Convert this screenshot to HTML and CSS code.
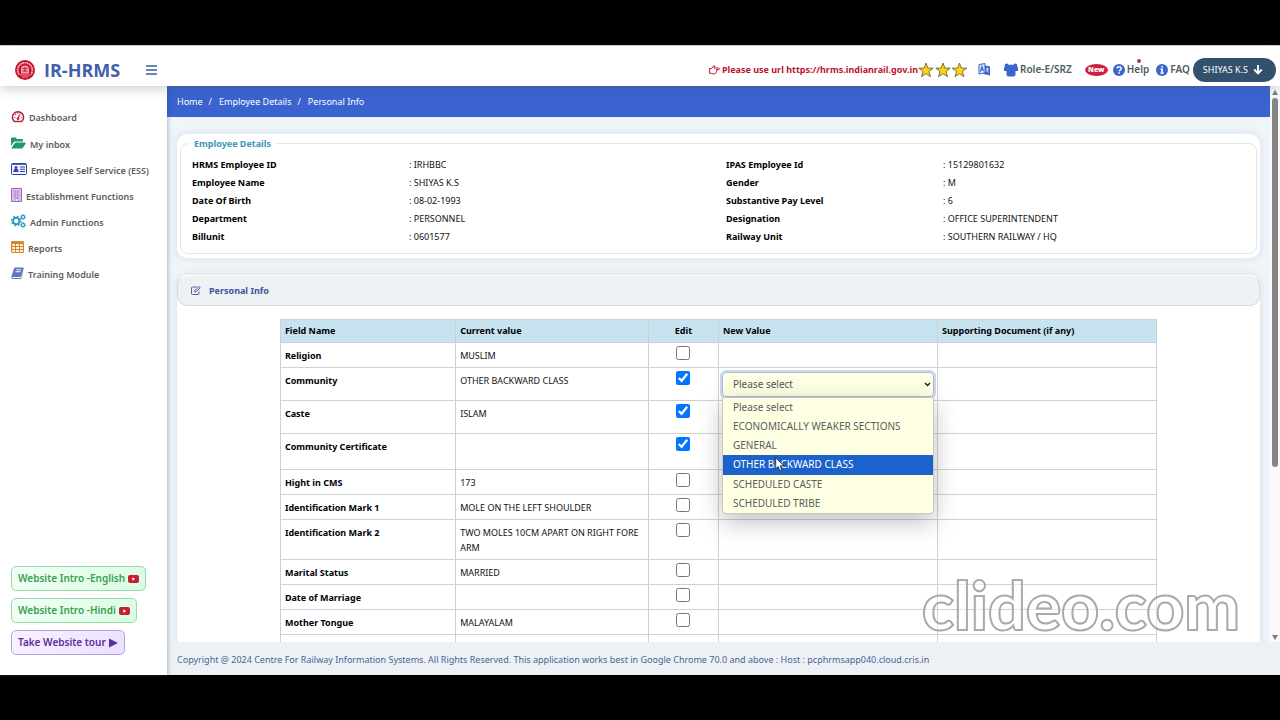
FILE: index.html
```html
<!DOCTYPE html>
<html lang="en">
<head>
  <meta charset="UTF-8">
  <title>IR-HRMS</title>
  <link rel="stylesheet" href="styles.css">
</head>
<body>
  <header class="topbar">
    <svg class="logo" width="20" height="20" viewBox="0 0 20 20">
      <circle cx="10" cy="10" r="10" fill="#c9142f"/>
      <path d="M4.200 14.500a7.300 7.300 0 1 1 11.600 0" fill="none" stroke="#f3c4ca" stroke-width="1.500" stroke-dasharray="1.700 .5"/>
      <path d="M6 13.500V9.500a4 4 0 0 1 8 0v4z" fill="#eda0aa"/>
      <path d="M7.500 8.500h5M7.500 11h5M10 7v5" stroke="#c9142f" stroke-width=".9"/>
      <path d="M5 15h10M7 17h6" stroke="#eda0aa" stroke-width=".9"/>
    </svg>
    <h1>IR-HRMS</h1>
    <button class="menu" aria-label="Menu">
      <svg width="12" height="10" viewBox="0 0 12 10"><path d="M0 1h11M0 5h11M0 9h11" stroke="#3d5f9c" stroke-width="1.6"/></svg>
    </button>
    <div class="notice">
      <svg width="11" height="10" viewBox="0 0 11 10" fill="none" stroke="#c2142c" stroke-width="1"><path d="M.6 3.5v4.8h1.700M.6 3.5h2L4.5.9c.9-.5 1.7.2 1.1 1.1L5 3h4.6c1.1 0 1.1 1.6 0 1.6H7.2M7.2 4.6c.9.2.9 1.4 0 1.5.7.3.5 1.5-.4 1.5 0 1-.5 1.300-1.400 1.300H3.9L2.300 8.300"/></svg>
      <span>Please use url https://hrms.indianrail.gov.in</span>
    </div>
    <svg class="stars" width="50" height="16" viewBox="0 0 50 16" fill="#ffd51c" stroke="#5d5518" stroke-width=".8">
      <path d="M8 1l1.8 5.1 5.4.1-4.3 3.3 1.6 5.2L8 11.6l-4.5 3.1 1.6-5.2L.8 6.2l5.4-.1z"/>
      <path d="M25 1l1.8 5.1 5.4.1-4.3 3.3 1.6 5.2-4.5-3.1-4.5 3.1 1.6-5.2-4.3-3.3 5.4-.1z"/>
      <path d="M41.500 1l1.800 5.100 5.400.1-4.300 3.300 1.600 5.200-4.500-3.100-4.500 3.100 1.600-5.200-4.300-3.300 5.400-.1z"/>
    </svg>
    <nav class="toplinks">
      <a href="#" class="language" aria-label="Language">
        <svg width="13" height="13" viewBox="0 0 13 13"><path d="M5.500 2l6.500 1.500v9L5.500 11z" fill="#3c64cf"/><path d="M1 1.500L7 .6v9.200L1 11z" fill="#dbe5fb" stroke="#3c64cf"/><path d="M2.500 8.500L4 3.500l1.600 4.600M3 7h2.200" fill="none" stroke="#3c64cf" stroke-width="1.100"/><path d="M8 5.700l3 .6M9.500 4.800v1.200c0 1.500-.7 2.300-1.500 2.700M8.500 7.200L11 9.500" fill="none" stroke="#fff" stroke-width=".7"/></svg>
      </a>
      <a href="#" class="role">
        <svg width="14" height="14" viewBox="0 0 14 14" fill="#3c64cf"><path d="M.8 3.500Q.400.800 2.700.600 4.500.600 5 2.300 7 .900 9 2.300 9.500.600 11.300.600q2.300.200 1.900 2.900Q14 4.300 14 5.500V8h-2.500v3.500q0 2-2 2h-5q-2 0-2-2V8H0V5.500Q0 4.300.8 3.500z"/></svg>
        <span>Role-E/SRZ</span>
      </a>
      <a href="#" class="help">
        <b class="new">New</b>
        <svg width="12" height="12" viewBox="0 0 12 12"><circle cx="6" cy="6" r="6" fill="#3c64cf"/><path d="M4 4.600c0-2.700 4.200-2.500 4.200-.1C8.200 6 6.200 6 6.100 7.400" fill="none" stroke="#fff" stroke-width="1.500"/><path d="M5.300 8.300h1.600v1.500H5.300z" fill="#fff"/></svg>
        <span class="help-text">Help<i class="dot"></i></span>
      </a>
      <a href="#" class="faq">
        <svg width="12" height="12" viewBox="0 0 12 12"><circle cx="6" cy="6" r="6" fill="#3c64cf"/><path d="M5.200 2h1.700v1.600H5.200zM4.400 4.600h2.500v3.900h.9v1.300H4.300V8.500h.9V5.800h-.8z" fill="#fff"/></svg>
        <span>FAQ</span>
      </a>
    </nav>
    <button class="user">SHIYAS K.S
      <svg width="10" height="10" viewBox="0 0 10 10"><path d="M5 0v8M1.200 4.500L5 8.300l3.800-3.800" fill="none" stroke="#fff" stroke-width="1.900"/></svg>
    </button>
  </header>

  <div class="layout">
    <aside class="sidebar">
      <nav class="sidenav">
        <a href="#" class="first">
          <svg width="14" height="13" viewBox="0 0 14 13" fill="none" stroke="#b3223a"><path d="M3.500 11.600a5.600 5.600 0 1 1 7 0z" stroke-width="1.500"/><path d="M7 8.500L8.700 4.500" stroke-width="1.200"/><circle cx="7" cy="8.800" r=".9" fill="#b3223a"/><path d="M3.400 7.500h1M9.800 7.500h1M4.300 4.300l.8.700M7 2.800v1M9.500 4.300l.5-.3" stroke-width="1.200"/></svg>
          <span>Dashboard</span>
        </a>
        <a href="#">
          <svg width="15" height="12" viewBox="0 0 15 12" fill="#229578"><path d="M0 9V1.500Q0 .5 1 .5h3.500q1 0 1 1V2H11q1 0 1 1v1.500H4.500q-1.400 0-2.300 1.200z"/><path d="M.5 11l3-4.500q.6-.9 1.600-.9h9.100q1 0 .4 1l-2.500 4q-.6.900-1.600.900H1.200q-1 0-.7-.5z"/></svg>
          <span>My inbox</span>
        </a>
        <a href="#">
          <svg width="16" height="12" viewBox="0 0 16 12"><rect x=".5" y=".5" width="15" height="11" rx="1" fill="#f1f4ff" stroke="#2b43ad"/><path d="M1 1.300h14" stroke="#2b43ad"/><circle cx="5" cy="4.600" r="1.500" fill="#2b43ad"/><path d="M2.500 9V7.600q0-1.500 1.500-1.500h2q1.500 0 1.500 1.500V9zM9 3.500h5v1H9zM9 5.700h5v1H9zM9 8h5v1H9z" fill="#2b43ad"/></svg>
          <span>Employee Self Service (ESS)</span>
        </a>
        <a href="#">
          <svg width="11" height="14" viewBox="0 0 11 14"><path d="M.5.500h10v13H.5z" fill="#e0c8f0" stroke="#9a62c0"/><path d="M2.500 3h6M2.500 5h6M2.500 7h6M2.500 9h6" stroke="#8d55b7" stroke-width="1" stroke-dasharray="1 .7"/><path d="M4 10.500h3v3H4z" fill="#fff" stroke="#9a62c0" stroke-width=".8"/></svg>
          <span>Establishment Functions</span>
        </a>
        <a href="#">
          <svg width="15" height="14" viewBox="0 0 15 14" fill="none" stroke="#249bbd"><circle cx="5.300" cy="7" r="3.200" stroke-width="2"/><circle cx="5.300" cy="7" r="4.800" stroke-width="1.200" stroke-dasharray="1.800 1.970"/><circle cx="12" cy="3" r="1.600" stroke-width="1.200"/><circle cx="12" cy="3" r="2.500" stroke-width=".7" stroke-dasharray="1 .95"/><circle cx="12" cy="11" r="1.600" stroke-width="1.200"/><circle cx="12" cy="11" r="2.500" stroke-width=".7" stroke-dasharray="1 .95"/></svg>
          <span>Admin Functions</span>
        </a>
        <a href="#">
          <svg width="13" height="12" viewBox="0 0 13 12"><rect width="13" height="12" rx="1.200" fill="#d18a32"/><path d="M1.200 3h2.800v2H1.200zM5 3h3v2H5zM9 3h2.800v2H9zM1.200 6h2.800v2H1.200zM5 6h3v2H5zM9 6h2.800v2H9zM1.200 9h2.800v2H1.200zM5 9h3v2H5zM9 9h2.800v2H9z" fill="#fff1d9"/></svg>
          <span>Reports</span>
        </a>
        <a href="#">
          <svg width="13" height="12" viewBox="0 0 13 12"><path d="M4 .4h8.200q.8 0 .5 1L10.400 9q-.3 1-1.200 1H2q-1 0-.7 1H10L12.900 3l-2.500 8.400q-.2.600-1 .600H1.700Q0 12 .3 10L3 1.200Q3.200.4 4 .4z" fill="#6178be"/><path d="M5.200 2.800h5M4.600 4.700h5" stroke="#fff" stroke-width=".9"/></svg>
          <span>Training Module</span>
        </a>
      </nav>
      <div class="tours">
        <button class="tour">Website Intro -English
          <svg width="11" height="8" viewBox="0 0 11 8"><rect width="11" height="8" rx="2" fill="#c51f32"/><path d="M4.300 2.200v3.600L7.300 4z" fill="#fff"/></svg>
        </button>
        <button class="tour">Website Intro -Hindi
          <svg width="11" height="8" viewBox="0 0 11 8"><rect width="11" height="8" rx="2" fill="#c51f32"/><path d="M4.300 2.200v3.600L7.300 4z" fill="#fff"/></svg>
        </button>
        <button class="tour purple">Take Website tour
          <svg width="9" height="10" viewBox="0 0 9 10"><path d="M0 .500v9L9 5z" fill="#5b2d9e"/></svg>
        </button>
      </div>
    </aside>

    <main class="main">
      <div class="scroll-area">
        <div class="page">
          <nav class="breadcrumb">
            <a href="#">Home</a><span>/</span><a href="#">Employee Details</a><span>/</span><a href="#">Personal Info</a>
          </nav>

          <section class="card details">
            <fieldset>
              <legend>Employee Details</legend>
              <dl>
                <dt>HRMS Employee ID</dt><dd>: IRHBBC</dd>
                <dt>IPAS Employee Id</dt><dd>: 15129801632</dd>
                <dt>Employee Name</dt><dd>: SHIYAS K.S</dd>
                <dt>Gender</dt><dd>: M</dd>
                <dt>Date Of Birth</dt><dd>: 08-02-1993</dd>
                <dt>Substantive Pay Level</dt><dd>: 6</dd>
                <dt>Department</dt><dd>: PERSONNEL</dd>
                <dt>Designation</dt><dd>: OFFICE SUPERINTENDENT</dd>
                <dt>Billunit</dt><dd>: 0601577</dd>
                <dt>Railway Unit</dt><dd>: SOUTHERN RAILWAY / HQ</dd>
              </dl>
            </fieldset>
          </section>

          <section class="card personal">
            <h2>
              <svg width="10" height="9" viewBox="0 0 10 9" fill="none" stroke="#4664ac"><path d="M6 1H1.500Q.5 1 .5 2v5.500q0 1 1 1h5.500q1 0 1-1V5.500"/><path d="M3.700 5.800l.3-1.500L8 .6l1.300 1.200-4 3.800z"/></svg>
              Personal Info
            </h2>
            <table>
              <thead>
                <tr><th>Field Name</th><th>Current value</th><th class="edit">Edit</th><th>New Value</th><th>Supporting Document (if any)</th></tr>
              </thead>
              <tbody>
                <tr><th>Religion</th><td>MUSLIM</td><td class="edit"><input type="checkbox" aria-label="Edit Religion"></td><td></td><td></td></tr>
                <tr class="tall"><th>Community</th><td>OTHER BACKWARD CLASS</td><td class="edit"><input type="checkbox" aria-label="Edit Community" checked></td>
                  <td class="new-value">
                    <select aria-label="Community">
                      <option>Please select</option>
                      <option>ECONOMICALLY WEAKER SECTIONS</option>
                      <option>GENERAL</option>
                      <option>OTHER BACKWARD CLASS</option>
                      <option>SCHEDULED CASTE</option>
                      <option>SCHEDULED TRIBE</option>
                    </select>
                    <ul class="options">
                      <li>Please select</li>
                      <li>ECONOMICALLY WEAKER SECTIONS</li>
                      <li>GENERAL</li>
                      <li class="active">OTHER BACKWARD CLASS
                        <svg class="cursor" width="10" height="15" viewBox="0 0 10 15"><path d="M.700.800v11l2.500-2.300 1.700 4 1.900-.8-1.700-3.900h3.700z" fill="#fff" stroke="#222" stroke-width=".8"/></svg>
                      </li>
                      <li>SCHEDULED CASTE</li>
                      <li>SCHEDULED TRIBE</li>
                    </ul>
                  </td><td></td></tr>
                <tr class="tall"><th>Caste</th><td>ISLAM</td><td class="edit"><input type="checkbox" aria-label="Edit Caste" checked></td><td></td><td></td></tr>
                <tr class="taller"><th>Community Certificate</th><td></td><td class="edit"><input type="checkbox" aria-label="Edit Community Certificate" checked></td><td></td><td></td></tr>
                <tr><th>Hight in CMS</th><td>173</td><td class="edit"><input type="checkbox" aria-label="Edit Hight in CMS"></td><td></td><td></td></tr>
                <tr><th>Identification Mark 1</th><td>MOLE ON THE LEFT SHOULDER</td><td class="edit"><input type="checkbox" aria-label="Edit Identification Mark 1"></td><td></td><td></td></tr>
                <tr><th>Identification Mark 2</th><td>TWO MOLES 10CM APART ON RIGHT FORE ARM</td><td class="edit"><input type="checkbox" aria-label="Edit Identification Mark 2"></td><td></td><td></td></tr>
                <tr><th>Marital Status</th><td>MARRIED</td><td class="edit"><input type="checkbox" aria-label="Edit Marital Status"></td><td></td><td></td></tr>
                <tr><th>Date of Marriage</th><td></td><td class="edit"><input type="checkbox" aria-label="Edit Date of Marriage"></td><td></td><td></td></tr>
                <tr><th>Mother Tongue</th><td>MALAYALAM</td><td class="edit"><input type="checkbox" aria-label="Edit Mother Tongue"></td><td></td><td></td></tr>
                <tr class="tall"><th></th><td></td><td></td><td></td><td></td></tr>
              </tbody>
            </table>
          </section>
        </div>
        <div class="scrollbar">
          <svg width="6" height="5" viewBox="0 0 6 5"><path d="M3 0l3 5H0z" fill="#7b7b7b"/></svg>
          <div class="thumb"></div>
          <svg width="6" height="5" viewBox="0 0 6 5"><path d="M3 5l3-5H0z" fill="#7b7b7b"/></svg>
        </div>
      </div>
      <footer>Copyright @ 2024 Centre For Railway Information Systems. All Rights Reserved. This application works best in Google Chrome 70.0 and above : Host : pcphrmsapp040.cloud.cris.in</footer>
    </main>
  </div>
  <div class="watermark">clideo.com</div>
</body>
</html>
```
FILE: styles.css
```css
*{
  box-sizing: border-box;
}

body{
  margin: 0;
  height: 100vh;
  padding: 45px 0;
  display: flex;
  flex-direction: column;
  background-color: #000000;
  color: #111111;
  font-family: "Noto Sans", "Open Sans", sans-serif;
  font-size: 9px;
  line-height: 15px;
  overflow: hidden;
}

a{
  color: inherit;
  text-decoration: none;
}

button{
  font: inherit;
  cursor: pointer;
}

svg{
  flex: none;
}

/* top bar */
.topbar{
  flex: none;
  height: 41px;
  padding: 7px 4px 0 15px;
  display: flex;
  align-items: center;
  background-color: #ffffff;
  border-top: 1px solid #c9ccc5;
  position: relative;
  z-index: 2;
  box-shadow: 0 2px 12px rgba(60, 80, 110, 0.3);
}

.topbar h1{
  margin: 0 26px 0 9px;
  font-family: "Open Sans", sans-serif;
  font-size: 18px;
  line-height: 24px;
  color: #3f5fae;
}

.menu{
  display: flex;
  padding: 0;
  border: 0;
  background: none;
}

.notice{
  margin-left: auto;
  display: flex;
  align-items: center;
  gap: 2px;
  font-weight: bold;
  color: #b9142c;
}

.toplinks{
  display: flex;
  align-items: center;
  margin-left: 10px;
  gap: 13px;
  font-size: 10px;
  font-weight: 600;
  color: #4b5d60;
}

.toplinks a{
  display: flex;
  align-items: center;
  gap: 2px;
}

.new{
  margin-right: 3px;
  width: 23px;
  height: 12px;
  line-height: 12px;
  border-radius: 50%;
  text-align: center;
  font-size: 7px;
  color: #ffffff;
  background-color: #cf1f3e;
}

.help-text{
  position: relative;
}

.dot{
  position: absolute;
  top: -3px;
  left: 10px;
  width: 4px;
  height: 4px;
  border-radius: 50%;
  background-color: #bd2f5f;
}

.toplinks .faq{
  margin-left: -6px;
}

.user{
  display: flex;
  align-items: center;
  gap: 5px;
  height: 24px;
  margin-left: 3px;
  padding: 0 13px 0 10px;
  border: 0;
  border-radius: 12px;
  color: #ffffff;
  background-color: #33506d;
  white-space: nowrap;
}

.layout{
  flex: 1;
  min-height: 0;
  display: flex;
}

/* sidebar */
.sidebar{
  flex: none;
  width: 167px;
  padding: 17px 0 20px 11px;
  display: flex;
  flex-direction: column;
  justify-content: space-between;
  background-color: #ffffff;
  box-shadow: 1px 0 4px rgba(60, 80, 110, 0.4);
  position: relative;
  z-index: 1;
}

.sidenav a{
  display: flex;
  align-items: center;
  gap: 4px;
  height: 26px;
  font-weight: 600;
  color: #5c5c5c;
  white-space: nowrap;
}

.sidenav .first{
  margin-bottom: 1px;
}

.sidenav span{
  padding-top: 2px;
}

.tours{
  display: flex;
  flex-direction: column;
  align-items: flex-start;
  gap: 7px;
}

.tour{
  display: flex;
  align-items: center;
  gap: 3px;
  height: 25px;
  padding: 0 6px;
  border: 1px solid #94dba3;
  border-radius: 5px;
  font-size: 10px;
  font-weight: 600;
  color: #35a04c;
  background: linear-gradient(135deg, #f4fff6, #d9fbe2);
}

.purple{
  border-color: #b9a2dc;
  color: #5b2d9e;
  background: linear-gradient(135deg, #f8f3ff, #eadfff);
}

/* content */
.main{
  flex: 1;
  min-width: 0;
  display: flex;
  flex-direction: column;
}

.scroll-area{
  flex: 1;
  min-height: 0;
  display: flex;
  background-color: #f0f5f9;
}

.page{
  flex: 1;
  overflow: hidden;
}

.breadcrumb{
  height: 31px;
  padding: 0 10px;
  display: flex;
  align-items: center;
  color: #ffffff;
  background-color: #3a63d0;
}

.breadcrumb span{
  margin: 0 7px 0 6px;
}

.card{
  margin: 17px 10px 0;
  border-radius: 10px;
  background-color: #ffffff;
  box-shadow: 0 0 10px rgba(90, 120, 150, 0.18);
}

.details{
  padding: 2px 3px 4px;
}

fieldset{
  margin: 0;
  padding: 5px 0 7px 11px;
  border: 1px solid #e2e5e7;
  border-radius: 8px;
}

legend{
  padding: 0 6px;
  margin-left: -4px;
  font-weight: bold;
  color: #3b96b8;
}

dl{
  margin: 0;
  display: grid;
  grid-template-columns: 217fr 317fr 217fr 313fr;
  line-height: 18px;
}

dt{
  font-weight: bold;
  color: #000000;
}

dd{
  margin: 0;
}

.personal h2{
  margin: 0;
  height: 31px;
  padding-left: 13px;
  display: flex;
  align-items: center;
  gap: 8px;
  border: 1px solid #d5dade;
  border-top-color: #ffffff;
  border-radius: 10px;
  font-size: 9px;
  color: #3856a0;
  background-color: #edf1f3;
}

table{
  width: 81%;
  margin: 13px auto 0;
  table-layout: fixed;
  border-collapse: collapse;
}

th, td{
  padding: 5px 4px 4px;
  border: 1px solid #ced1d4;
  text-align: left;
  vertical-align: top;
}

th{
  color: #000000;
}

thead th{
  width: 25%;
  padding: 3px 4px 4px;
  background-color: #c7e3f0;
}

thead th:first-child{
  width: 20%;
}

thead th:nth-child(2){
  width: 22%;
}

thead .edit{
  width: 8%;
  text-align: center;
}

tbody .edit{
  padding: 3px 0 0;
}

.edit input{
  display: block;
  width: 14px;
  height: 14px;
  margin: 0 auto;
}

.tall{
  height: 33px;
}

.taller{
  height: 36px;
}

.new-value{
  position: relative;
  padding: 4px 3px 3px;
}

select{
  display: block;
  width: 100%;
  height: 25px;
  padding: 0 10px;
  border: 1px solid #a9b8dc;
  border-radius: 4px;
  outline: 2px solid #cbd6f3;
  font: inherit;
  font-size: 10px;
  color: #4f5753;
  appearance: none;
  background: #ffffe4 url("data:image/svg+xml,%3Csvg xmlns='http://www.w3.org/2000/svg' width='7' height='5'%3E%3Cpath d='M1 1l2.500 2.500L6 1' fill='none' stroke='%23222' stroke-width='1.500'/%3E%3C/svg%3E") no-repeat right 2px center;
}

.options{
  position: absolute;
  top: 29px;
  left: 3px;
  right: 3px;
  z-index: 1;
  height: 117px;
  margin: 0;
  padding: 0;
  display: grid;
  grid-auto-rows: 1fr;
  list-style: none;
  border: 1px solid #c5c9bb;
  border-radius: 0 0 4px 4px;
  background-color: #ffffe4;
  box-shadow: 0 8px 24px rgba(0, 0, 0, 0.25);
}

.options li{
  padding-left: 10px;
  font-size: 10px;
  line-height: 19px;
  color: #57605c;
  white-space: nowrap;
}

.options .active{
  position: relative;
  color: #ffffff;
  background-color: #1b62ca;
}

.cursor{
  position: absolute;
  left: 52px;
  top: 2px;
}

.scrollbar{
  flex: none;
  width: 10px;
  padding: 4px 0 2px;
  display: flex;
  flex-direction: column;
  align-items: center;
  background-color: #fafafa;
}

.thumb{
  width: 6px;
  height: 67%;
  margin: 3px 0 auto;
  border-radius: 3px;
  background-color: #858585;
}

footer{
  flex: none;
  height: 33px;
  padding: 10px;
  color: #46649c;
  background-color: #edf1f4;
  white-space: nowrap;
}

.watermark{
  position: absolute;
  right: 40px;
  bottom: 75px;
  z-index: 3;
  font-family: Lato, sans-serif;
  font-size: 66px;
  font-weight: 900;
  line-height: 80px;
  color: rgba(255, 255, 255, 0.5);
  -webkit-text-stroke: 2px #aaaaaa;
  pointer-events: none;
}
```
